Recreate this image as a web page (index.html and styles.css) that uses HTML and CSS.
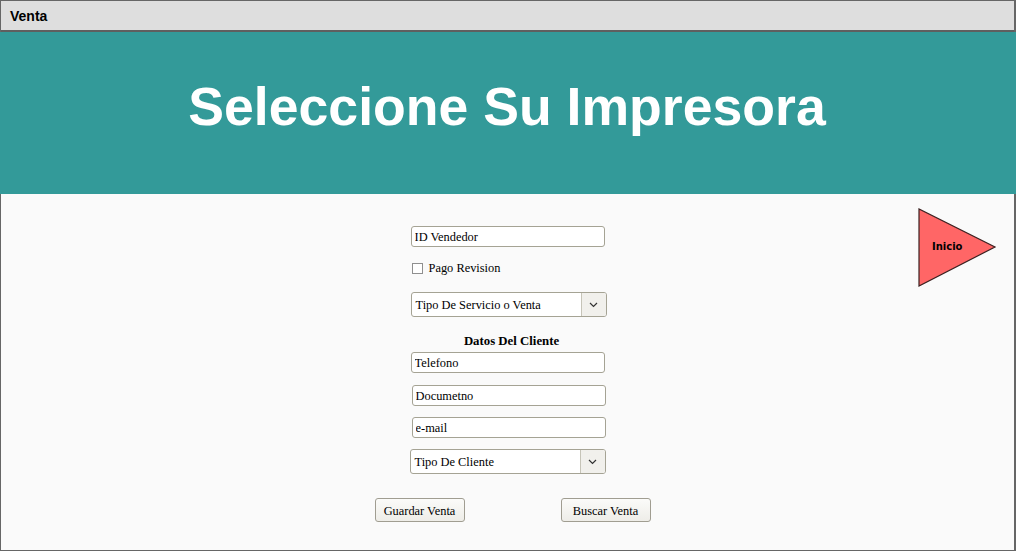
FILE: index.html
```html
<!DOCTYPE html>
<html lang="es">
<head>
<meta charset="utf-8">
<title>Venta</title>
<link rel="stylesheet" href="styles.css">
</head>
<body>
<div class="window">
  <div class="titlebar">Venta</div>
  <div class="banner"><h1>Seleccione Su Impresora</h1></div>
  <div class="content">
    <form class="form">
      <input class="field f-id" type="text" value="ID Vendedor">
      <label class="check"><span class="box"></span>Pago Revision</label>
      <div class="select s-tipo"><span class="sel-text">Tipo De Servicio o Venta</span><span class="sel-btn"><svg width="9" height="6" viewBox="0 0 9 6"><path d="M1 1 L4.5 4.5 L8 1" fill="none" stroke="#333" stroke-width="1.2"/></svg></span></div>
      <div class="section">Datos Del Cliente</div>
      <input class="field f-tel" type="text" value="Telefono">
      <input class="field f-doc" type="text" value="Documetno">
      <input class="field f-mail" type="text" value="e-mail">
      <div class="select s-cli"><span class="sel-text">Tipo De Cliente</span><span class="sel-btn"><svg width="9" height="6" viewBox="0 0 9 6"><path d="M1 1 L4.5 4.5 L8 1" fill="none" stroke="#333" stroke-width="1.2"/></svg></span></div>
      <div class="buttons">
        <button type="button" class="btn">Guardar Venta</button>
        <button type="button" class="btn">Buscar Venta</button>
      </div>
    </form>
    <div class="inicio">
      <svg width="80" height="80" viewBox="0 0 80 80"><polygon points="1,1 1,78 77,39" fill="#ff6666" stroke="#3a2020" stroke-width="1.2"/></svg>
      <span class="inicio-label">Inicio</span>
    </div>
  </div>
</div>
</body>
</html>
```
FILE: styles.css
```css
* { box-sizing: border-box; }
html, body { margin: 0; padding: 0; }
body {
  width: 1016px;
  height: 551px;
  overflow: hidden;
  background: #fafafa;
  font-family: "Liberation Serif", "Times New Roman", serif;
}
.window {
  width: 1016px;
  height: 551px;
  border: 1px solid #666;
  border-right-width: 2px;
  display: flex;
  flex-direction: column;
  background: #fafafa;
}
.titlebar {
  height: 31px;
  flex: none;
  background: #dedede;
  border-bottom: 2px solid #5f5f5f;
  font-family: "Liberation Sans", Arial, sans-serif;
  font-weight: bold;
  font-size: 14px;
  line-height: 30px;
  padding-left: 9px;
  color: #000;
}
.banner {
  height: 162px;
  flex: none;
  background: #339a99;
  margin: 0 -2px 0 -1px;
  display: flex;
  align-items: center;
  justify-content: center;
}
.banner h1 {
  margin: 0;
  font-family: "Liberation Sans", Arial, sans-serif;
  font-weight: bold;
  font-size: 53.6px;
  color: #fff;
  line-height: 1;
  padding-bottom: 12px;
  padding-right: 2px;
}
.content {
  position: relative;
  flex: 1;
}
.form {
  width: 196px;
  margin: 32px auto 0;
  display: flex;
  flex-direction: column;
  font-size: 12.4px;
  color: #000;
}
.field {
  width: 194px;
  height: 21px;
  border: 1px solid #a5a394;
  border-radius: 3px;
  background: #fff;
  font-family: "Liberation Serif", "Times New Roman", serif;
  font-size: 12.4px;
  padding: 2px 3px 0;
  color: #000;
  margin: 0;
  outline: none;
}
.f-id { margin-left: 1px; }
.check {
  display: flex;
  align-items: center;
  margin: 15px 0 0 2px;
  height: 12px;
  font-size: 12.4px;
}
.box {
  width: 11px;
  height: 11px;
  border: 1px solid #8f8f8f;
  background: #fff;
  margin-right: 6px;
}
.select {
  display: flex;
  width: 196px;
  height: 25px;
  border: 1px solid #a5a394;
  border-radius: 3px;
  background: #fff;
  font-size: 12.4px;
  overflow: hidden;
}
.s-tipo { margin: 18px 0 0 1px; }
.s-cli { margin: 11px 0 0 0; }
.sel-text {
  flex: 1;
  display: flex;
  align-items: center;
  padding: 2px 0 0 4px;
}
.sel-btn {
  width: 25px;
  flex: none;
  border-left: 1px solid #c6c4b8;
  background: #f1f0ec;
  display: flex;
  align-items: center;
  justify-content: center;
}
.section {
  margin-top: 17px;
  text-align: center;
  font-weight: bold;
  font-size: 12.8px;
  height: 14px;
  line-height: 14px;
  padding-left: 8px;
}
.f-tel { margin: 4px 0 0 1px; }
.f-doc { margin: 12px 0 0 2px; }
.f-mail { margin: 11px 0 0 2px; }
.buttons {
  display: flex;
  justify-content: space-between;
  width: 276px;
  margin: 24px 0 0 -35px;
}
.btn {
  width: 90px;
  height: 24px;
  border: 1px solid #a09d91;
  border-radius: 3px;
  background: linear-gradient(#fbfbf9, #eeede8);
  font-family: "Liberation Serif", "Times New Roman", serif;
  font-size: 12.4px;
  color: #000;
  padding: 2px 0 0;
}
.inicio {
  position: absolute;
  left: 917px;
  top: 14px;
  width: 80px;
  height: 80px;
}
.inicio svg { display: block; }
.inicio-label {
  position: absolute;
  left: 14px;
  top: 33px;
  font-family: "DejaVu Sans", Verdana, sans-serif;
  font-weight: bold;
  font-size: 10px;
  color: #000;
}
```
